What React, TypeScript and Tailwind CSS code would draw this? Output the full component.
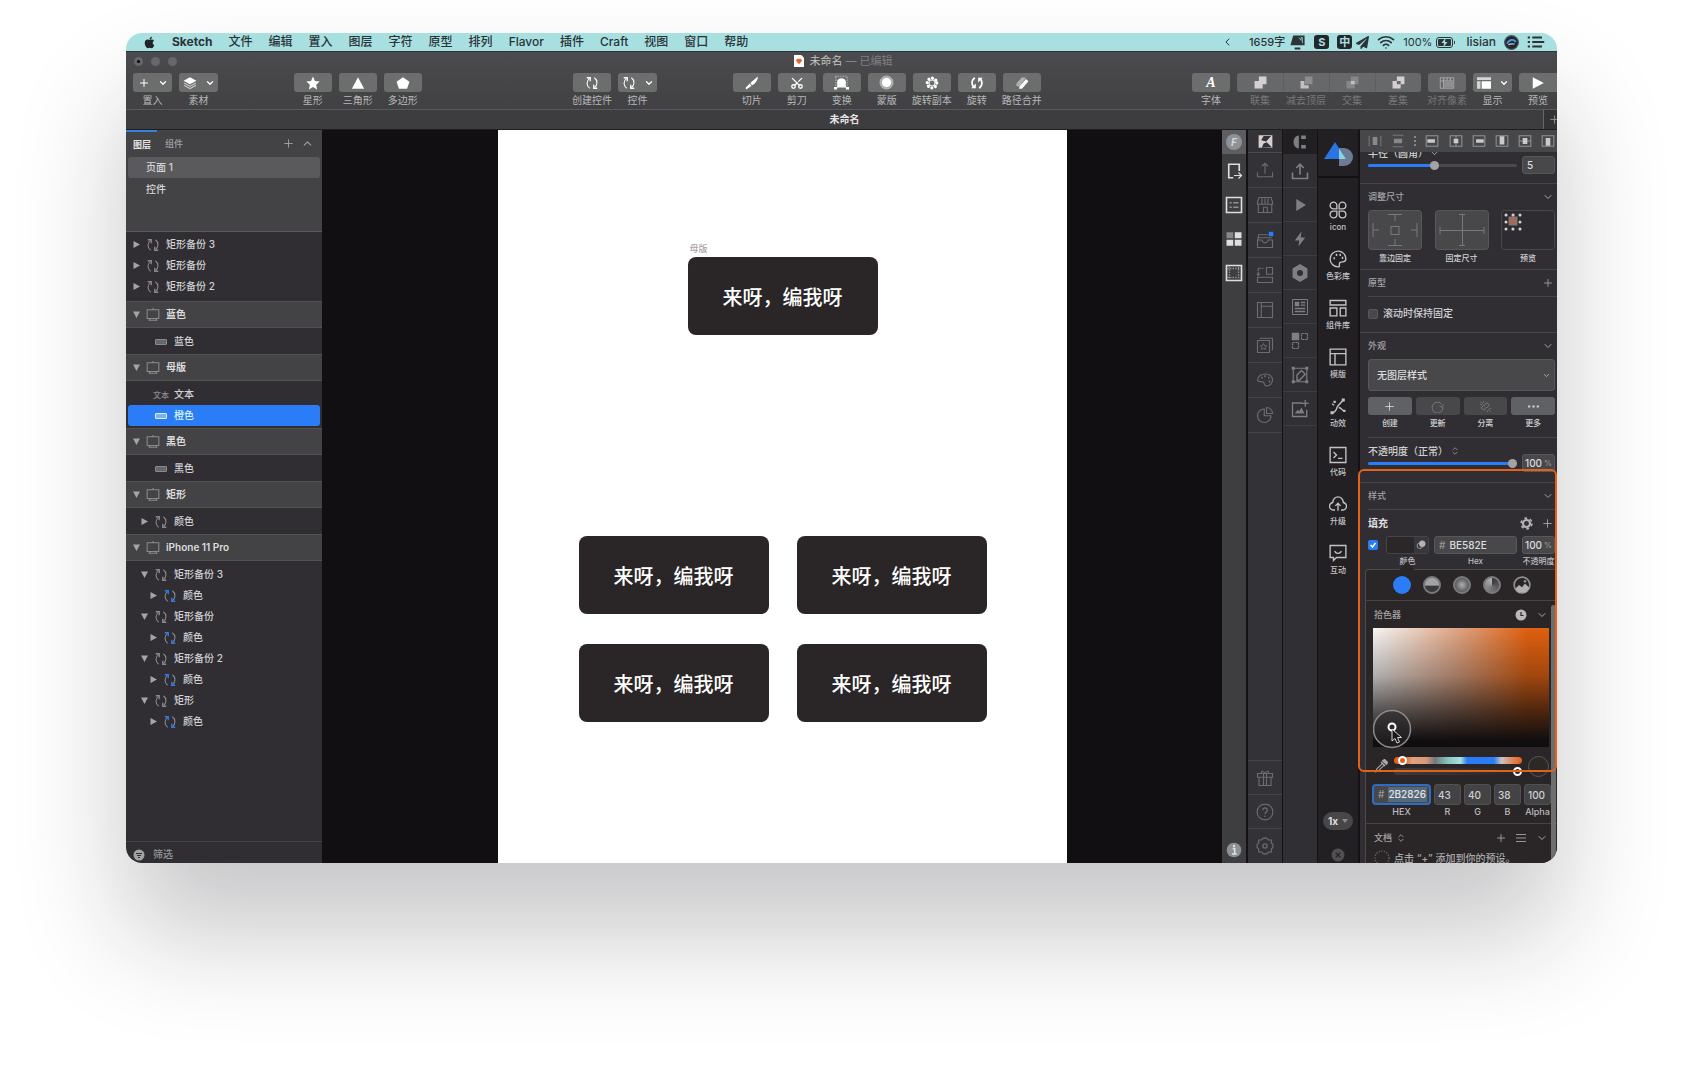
import { ReactNode } from 'react';
import { ChevronDown, ChevronUp, ChevronsUpDown, Plus, Scissors, Wifi } from 'lucide-react';
import { FaApple, FaPaperPlane } from 'react-icons/fa';

type SvgProps = { size?: number; className?: string; children?: ReactNode };

function Svg({ size = 18, className = '', children }: SvgProps) {
  return (
    <svg
      width={size}
      height={size}
      viewBox="0 0 24 24"
      fill="none"
      stroke="currentColor"
      strokeWidth="1.8"
      className={`shrink-0 ${className}`}
      aria-hidden="true"
    >
      {children}
    </svg>
  );
}

function SymbolIcon({ size = 14, accent = 'currentColor' }: { size?: number; accent?: string }) {
  return (
    <Svg size={size}>
      <path d="M8 21 C2 17 2 8 8 4" />
      <path d="M16 3 C22 7 22 16 16 20" />
      <path d="M3 3h6v6" stroke={accent} strokeWidth="2.2" />
      <path d="M21 21h-6v-6" stroke={accent} strokeWidth="2.2" />
    </Svg>
  );
}

/* ---------- menu bar ---------- */

const menus = ['文件', '编辑', '置入', '图层', '字符', '原型', '排列', 'Flavor', '插件', 'Craft', '视图', '窗口', '帮助'];

function MenuBar() {
  return (
    <nav className="flex h-[18px] shrink-0 items-center justify-between bg-[#a8dfe1] pl-[17px] pr-3 text-xs font-medium leading-[18px] text-[#2b3437]">
      <div className="flex items-center gap-4">
        <FaApple size={13} className="text-[#1f2426]" />
        <a href="#sketch" className="font-bold">Sketch</a>
        {menus.map((menu) => (
          <a key={menu} href={`#${menu}`}>{menu}</a>
        ))}
      </div>
      <div className="flex items-center text-[11px]">
        <Svg size={10}><path d="M15 4 7 12l8 8" strokeWidth="2.4" /></Svg>
        <span className="ml-4">1659字</span>
        <Svg size={17} className="ml-1">
          <path d="M6 2h16v14H2z M8 19h8v3H8z" fill="currentColor" stroke="none" />
          <path d="m14 5 3 4v-4h2v8" stroke="#a8dfe1" strokeWidth="1" />
        </Svg>
        <span className="ml-2 flex h-[14px] w-[15px] items-center justify-center rounded-[3px] bg-[#20282a] text-[11px] font-bold leading-none text-[#a8dfe1]">S</span>
        <span className="ml-2 flex h-[14px] w-[15px] items-center justify-center rounded-[3px] bg-[#20282a] text-[11px] font-bold leading-none text-[#a8dfe1]">中</span>
        <FaPaperPlane size={13} className="ml-1" />
        <Wifi size={18} strokeWidth={2.2} className="ml-2" />
        <span className="ml-2 font-normal">100%</span>
        <svg width="20" height="11" viewBox="0 0 20 11" className="ml-1" aria-hidden="true">
          <rect x=".5" y=".5" width="16" height="10" rx="2.5" fill="none" stroke="currentColor" />
          <rect x="2" y="2" width="13" height="7" rx="1" fill="currentColor" />
          <path d="M18 3.500c1.400.6 1.400 3.400 0 4z" fill="currentColor" />
          <path d="M9.500 1 5.500 6H8l-.5 4 4-5H9z" fill="#a8dfe1" />
        </svg>
        <span className="ml-[10px] text-xs">lisian</span>
        <Svg size={15} className="ml-2">
          <circle cx="12" cy="12" r="11" fill="#23262c" stroke="#4a5560" />
          <path d="M5 14c3-7 10-8 14-3" stroke="#4b95ea" strokeWidth="3" />
          <path d="M7 16c4-3 7-1 10-2" stroke="#c9d4de" />
        </Svg>
        <Svg size={18} className="ml-2">
          <path d="M7 6h13M7 12h16M7 18h13" strokeWidth="2.600" />
          <path d="M1 6h3M1 12h3M1 18h3" strokeWidth="2.600" />
        </Svg>
      </div>
    </nav>
  );
}

/* ---------- toolbar ---------- */

type ToolProps = {
  label: string;
  icon: ReactNode;
  menu?: boolean;
  disabled?: boolean;
  width?: string;
  shape?: string;
};

function Tool({ label, icon, menu, disabled, width, shape = 'rounded-[3px]' }: ToolProps) {
  return (
    <button
      type="button"
      disabled={disabled}
      className={`group flex shrink-0 flex-col items-center ${width ?? (menu ? 'w-[39px]' : 'w-[38px]')}`}
    >
      <span
        className={`flex h-[19px] w-full items-center justify-center gap-2 bg-[#6c6e6e] text-white group-disabled:bg-[#666869] group-disabled:text-[#a9a7a9] ${shape}`}
      >
        {icon}
        {menu && <ChevronDown size={10} strokeWidth={3} />}
      </span>
      <span className="h-[15px] whitespace-nowrap text-[10px] leading-4 text-[#b8b8ba] group-disabled:text-[#77777b]">
        {label}
      </span>
    </button>
  );
}

const solid = { fill: 'currentColor', stroke: 'none' };

function ToolBar() {
  return (
    <header className="shrink-0 border-t border-[#2c3438] bg-linear-to-b from-[#4b4b4d] to-[#414143] pb-[2px]">
      <div className="grid h-[21px] grid-cols-[1fr_auto_1fr] items-start">
        <div className="flex gap-2 pl-2 pt-[5px]">
          <span className="flex size-[9px] items-center justify-center rounded-full bg-[#66666d]">
            <i className="size-[3px] rounded-full bg-black" />
          </span>
          <span className="size-[9px] rounded-full bg-[#66666d]" />
          <span className="size-[9px] rounded-full bg-[#66666d]" />
        </div>
        <h1 className="flex items-center gap-[5px] pl-1 text-[11px] leading-[18px] text-[#c4c4c6]">
          <svg width="10" height="12" viewBox="0 0 11 13" aria-hidden="true">
            <path d="M0 0h8l3 3v10H0z" fill="#fff" />
            <path d="M3.500 4h4l1.500 2-3.500 4L2 6z" fill="#e4672b" />
          </svg>
          <span>未命名 <span className="text-[#7f7f83]">— 已编辑</span></span>
        </h1>
      </div>
      <div className="flex pl-[7px]">
        <div className="flex gap-[7px]">
          <Tool label="置入" menu icon={<Plus size={12} strokeWidth={2} />} />
          <Tool
            label="素材"
            menu
            icon={
              <Svg size={14}>
                <path d="m12 2 11 6-11 6L1 8z" {...solid} />
                <path d="m2 12 10 5.500L22 12M2 16l10 5.500L22 16" stroke="#c9c9c9" />
              </Svg>
            }
          />
        </div>
        <div className="flex-1" />
        <div className="flex gap-[7px]">
          <Tool
            label="星形"
            icon={<Svg size={14}><path d="m12 1 3.400 7.400 8 1-6 5.600 1.600 8L12 19l-7 4 1.600-8-6-5.600 8-1z" {...solid} /></Svg>}
          />
          <Tool label="三角形" icon={<Svg size={14}><path d="M12 2 22.500 22h-21z" {...solid} /></Svg>} />
          <Tool label="多边形" icon={<Svg size={14}><path d="m12 2 11 8-4 12H5L1 10z" {...solid} /></Svg>} />
        </div>
        <div className="flex-2" />
        <div className="flex gap-[7px]">
          <Tool label="创建控件" icon={<SymbolIcon />} />
          <Tool label="控件" menu icon={<SymbolIcon />} />
        </div>
        <div className="flex-1" />
        <div className="flex gap-[7px]">
          <Tool
            label="切片"
            icon={<Svg size={14}><path d="M22 1 9 12l3 4c5-2 10-8 10-15zM8 13l3 4-9 6-1-3z" {...solid} /></Svg>}
          />
          <Tool label="剪刀" icon={<Scissors size={14} strokeWidth={2.200} className="-rotate-90" />} />
          <Tool
            label="变换"
            icon={
              <Svg size={15}>
                <path d="M2 2h20M3 3v17M21 3v17" stroke="#bdbdbd" strokeDasharray="2 2" />
                <path d="M4 20c2-3 1-5 1-9 0-8 14-8 14 0 0 4-1 6 1 9z" {...solid} />
                <path d="M0 19h5v4H0zM19 19h5v4h-5z" {...solid} />
              </Svg>
            }
          />
          <Tool
            label="蒙版"
            icon={
              <Svg size={15}>
                <circle cx="12" cy="12" r="10.500" fill="#a9abab" stroke="#c9c9c9" strokeWidth="1" />
                <circle cx="12" cy="12" r="7.500" {...solid} />
              </Svg>
            }
          />
          <Tool
            label="旋转副本"
            icon={
              <Svg size={14}>
                <circle cx="12" cy="12" r="8.200" strokeWidth="5.600" strokeDasharray="0.010 6.430" strokeLinecap="round" />
                <circle cx="12" cy="12" r="5" strokeWidth="1.500" />
              </Svg>
            }
          />
          <Tool
            label="旋转"
            icon={
              <Svg size={14}>
                <path d="M8 20C2 16 2 8 8 3" strokeWidth="3" />
                <path d="M16 4c6 4 6 12 0 17" strokeWidth="3" />
                <path d="M2 21h8v-8zM22 3h-8v8z" {...solid} />
              </Svg>
            }
          />
          <Tool
            label="路径合并"
            icon={
              <Svg size={14}>
                <path d="M3 12 12 2l7 1L7 18l-5-1z" fill="#b0b0b0" stroke="none" />
                <path d="M8 17 19 5l4 4-11 13H7z" {...solid} />
              </Svg>
            }
          />
        </div>
        <div className="flex-2" />
        <div className="flex gap-[7px]">
          <Tool label="字体" icon={<span className="font-[Liberation_Serif] text-sm font-bold italic leading-none">A</span>} />
          <div className="flex">
            <Tool
              label="联集"
              disabled
              width="w-[46px]"
              shape="rounded-l-[3px]"
              icon={<Svg size={13}><path d="M9 1h14v14h-7v8H1V9h8z" fill="#d5cfd1" stroke="none" /></Svg>}
            />
            <Tool
              label="减去顶层"
              disabled
              width="w-[46px]"
              shape="border-l border-[#5c5e61]"
              icon={
                <Svg size={13}>
                  <path d="M9 1h14v14H9z" fill="#8c8e8e" stroke="none" />
                  <path d="M1 9h7v8h8v6H1z" fill="#c5bfc1" stroke="none" />
                </Svg>
              }
            />
            <Tool
              label="交集"
              disabled
              width="w-[46px]"
              shape="border-l border-[#5c5e61]"
              icon={
                <Svg size={13}>
                  <path d="M9 1h14v14H9zM1 9h15v14H1z" fill="#858787" stroke="none" />
                  <path d="M9 9h7v6H9z" fill="#c5bfc1" stroke="none" />
                </Svg>
              }
            />
            <Tool
              label="差集"
              disabled
              width="w-[46px]"
              shape="rounded-r-[3px] border-l border-[#5c5e61]"
              icon={
                <Svg size={13}>
                  <path d="M9 1h14v14h-7v8H1V9h8z" fill="#d5cfd1" stroke="none" />
                  <path d="M9 9h7v6H9z" fill="#66686a" stroke="none" />
                </Svg>
              }
            />
          </div>
          <Tool
            label="对齐像素"
            disabled
            icon={
              <Svg size={16}>
                <path d="M2 4h20v16H2z" strokeDasharray="2 1" />
                <path d="M2 9h20M7 4v16M12 4v5M17 4v5" />
                <path d="M8 10h13v9H8z" fill="#8f8f91" stroke="none" />
              </Svg>
            }
          />
          <Tool
            label="显示"
            menu
            icon={
              <Svg size={14}>
                <path d="M0 2h24v5H0zM0 9h6v13H0z" {...solid} fill="#d5d5d5" />
                <path d="M8 9h16v13H8z" {...solid} />
              </Svg>
            }
          />
          <Tool
            label="预览"
            shape="rounded-l-[3px]"
            icon={<Svg size={14}><path d="M3 2v20l19-10z" {...solid} /></Svg>}
          />
        </div>
      </div>
    </header>
  );
}

/* ---------- layer list ---------- */

type Layer = {
  name: string;
  kind: 'symbol' | 'override' | 'rect' | 'text';
  level: number;
  open?: boolean;
  selected?: boolean;
};

const layerGroups: { artboard?: string; layers: Layer[] }[] = [
  {
    layers: [
      { name: '矩形备份 3', kind: 'symbol', level: 0 },
      { name: '矩形备份', kind: 'symbol', level: 0 },
      { name: '矩形备份 2', kind: 'symbol', level: 0 },
    ],
  },
  { artboard: '蓝色', layers: [{ name: '蓝色', kind: 'rect', level: 1 }] },
  {
    artboard: '母版',
    layers: [
      { name: '文本', kind: 'text', level: 1 },
      { name: '橙色', kind: 'rect', level: 1, selected: true },
    ],
  },
  { artboard: '黑色', layers: [{ name: '黑色', kind: 'rect', level: 1 }] },
  { artboard: '矩形', layers: [{ name: '颜色', kind: 'symbol', level: 1 }] },
  {
    artboard: 'iPhone 11 Pro',
    layers: [
      { name: '矩形备份 3', kind: 'symbol', level: 1, open: true },
      { name: '颜色', kind: 'override', level: 2 },
      { name: '矩形备份', kind: 'symbol', level: 1, open: true },
      { name: '颜色', kind: 'override', level: 2 },
      { name: '矩形备份 2', kind: 'symbol', level: 1, open: true },
      { name: '颜色', kind: 'override', level: 2 },
      { name: '矩形', kind: 'symbol', level: 1, open: true },
      { name: '颜色', kind: 'override', level: 2 },
    ],
  },
];

const indents = ['pl-[5px]', 'pl-[13px]', 'pl-[22px]'];

function Arrow({ open }: { open?: boolean }) {
  return (
    <svg width="7" height="7" viewBox="0 0 7 7" fill="#a5a5a7" aria-hidden="true">
      <path d={open ? 'M0 .5h7L3.500 7z' : 'M.5 0v7L7 3.500z'} />
    </svg>
  );
}

function LayerRow({ layer }: { layer: Layer }) {
  const hasArrow = layer.kind === 'symbol' || layer.kind === 'override';
  return (
    <button
      type="button"
      className={`mx-[2px] flex h-[21px] items-center gap-[6px] rounded-[3px] text-[10px] font-medium ${indents[layer.level]} ${
        layer.selected ? 'bg-[#2a7df6] text-[#d5f2ea]' : 'text-[#d2d2d4]'
      }`}
    >
      <span className="w-[7px]">{hasArrow && <Arrow open={layer.open} />}</span>
      <span className={`flex w-[14px] justify-center ${layer.selected ? 'text-[#d5f2ea]' : 'text-[#8a8b90]'}`}>
        {layer.kind === 'symbol' && <SymbolIcon />}
        {layer.kind === 'override' && <SymbolIcon accent="#2a7df6" />}
        {layer.kind === 'text' && <span className="whitespace-nowrap text-[8px]">文本</span>}
        {layer.kind === 'rect' && (
          <svg width="12" height="6" viewBox="0 0 12 6" aria-hidden="true">
            <rect x=".5" y=".5" width="11" height="5" rx=".5" fill={layer.selected ? '#7fb0e8' : '#66676b'} stroke="currentColor" />
          </svg>
        )}
      </span>
      {layer.name}
    </button>
  );
}

function Sidebar() {
  return (
    <aside className="flex w-[196px] shrink-0 flex-col bg-[#302e33]">
      <div className="border-b border-[#5a5a5c] bg-[#434345] pb-[31px]">
        <div className="flex h-[27px] items-center text-[9px] font-medium text-[#a0a0a2]">
          <button type="button" className="h-full border-t-2 border-[#3b7fdc] pl-[7px] pr-[6px] font-bold text-[#e4e4e6]">图层</button>
          <button type="button" className="ml-2 h-full">组件</button>
          <button type="button" aria-label="添加页面" className="ml-auto"><Plus size={13} strokeWidth={1.700} /></button>
          <button type="button" aria-label="收起页面" className="ml-[6px] mr-2"><ChevronUp size={13} strokeWidth={2} /></button>
        </div>
        <div className="mx-[2px] flex flex-col gap-px text-[10px] font-medium text-[#d6d6d8]">
          <button type="button" className="h-[21px] rounded-[3px] bg-[#5a5a5c] pl-[18px] text-left">页面 1</button>
          <button type="button" className="h-[21px] pl-[18px] text-left">控件</button>
        </div>
      </div>
      <div className="flex min-h-0 flex-1 flex-col overflow-hidden">
        {layerGroups.map((group, i) => (
          <section key={i} className="flex flex-col">
            {group.artboard && (
              <button
                type="button"
                className="flex h-[27px] items-center gap-[6px] border-y border-[#525254] bg-[#434345] pl-[7px] text-[10px] font-semibold text-[#dcdcde]"
              >
                <Arrow open />
                <Svg size={14} className="text-[#8a8b90]">
                  <path d="M2 3h20v15H2zM12 0v3M7 18l-2 4M17 18l2 4M5 21h14" />
                </Svg>
                {group.artboard}
              </button>
            )}
            <div className={`flex flex-col ${group.artboard ? 'pb-[2px] pt-[3px]' : 'pb-1 pt-[2px]'}`}>
              {group.layers.map((layer, j) => (
                <LayerRow key={j} layer={layer} />
              ))}
            </div>
          </section>
        ))}
      </div>
      <label className="flex h-[22px] shrink-0 items-center gap-2 border-t border-[#464448] pl-[7px] pt-1 text-[10px] font-medium text-[#98989b]">
        <Svg size={12}>
          <circle cx="12" cy="12" r="11" fill="#a3a3a5" stroke="none" />
          <path d="M6 9h12M8 13h8M10 17h4" stroke="#302e33" strokeWidth="2.200" />
        </Svg>
        <input aria-label="筛选" placeholder="筛选" className="min-w-0 flex-1 bg-transparent outline-none placeholder:text-[#98989b]" />
      </label>
    </aside>
  );
}

/* ---------- canvas ---------- */

function Card() {
  return (
    <div className="flex h-[78px] w-[190px] items-center justify-center rounded-lg bg-[#2a2628] pt-1 text-xl font-medium text-white">
      来呀，编我呀
    </div>
  );
}

function Canvas() {
  return (
    <main className="flex min-w-0 flex-1 bg-[#110f11] pl-[176px] pr-[155px]">
      <div className="flex flex-1 flex-col items-center overflow-hidden bg-white pt-28">
        <figure>
          <figcaption className="pb-px pl-[2px] text-[9px] font-medium leading-[14px] text-[#a9a3a5]">母版</figcaption>
          <Card />
        </figure>
        <div className="mt-[201px] grid grid-cols-2 gap-x-7 gap-y-[30px]">
          <Card />
          <Card />
          <Card />
          <Card />
        </div>
      </div>
    </main>
  );
}

/* ---------- plugin strips ---------- */

function Strip({ icons, cell, line }: { icons: { name: string; icon: ReactNode }[]; cell: string; line: string }) {
  return (
    <>
      {icons.map(({ name, icon }) => (
        <button key={name} type="button" aria-label={name} className={`flex shrink-0 items-center justify-center ${cell} ${line}`}>
          {icon}
        </button>
      ))}
    </>
  );
}

const flowIcons = [
  {
    name: 'export',
    icon: <Svg><path d="M11 21H5V3h14v9" strokeWidth="2.200" /><path d="M12 18h9M18 14l4 4-4 4" strokeWidth="1.600" /></Svg>,
  },
  {
    name: 'list',
    icon: <Svg><path d="M2 2h20v20H2z" strokeWidth="2.200" /><path d="M6 9h3M6 15h3M11 9h7M11 15h7" stroke="#909092" /></Svg>,
  },
  {
    name: 'tiles',
    icon: (
      <Svg>
        <path d="M2 3h9v8H2z" fill="#88888a" stroke="none" />
        <path d="M13 3h9v8h-9zM2 13h9v8H2zM13 13h9v8h-9z" {...solid} />
      </Svg>
    ),
  },
  {
    name: 'frame',
    icon: <Svg><path d="M2 2h20v20H2z" strokeWidth="2.200" /><path d="M6 3v18M18 3v18M3 6h18M3 18h18" stroke="#909092" strokeDasharray="2 1.500" /></Svg>,
  },
];

const kitchenIcons = [
  { name: 'upload', icon: <Svg><path d="M2 15v6h20v-6M12 17V3M8 7l4-4 4 4" strokeWidth="1.500" /></Svg> },
  {
    name: 'store',
    icon: (
      <Svg>
        <path d="M4 2h16l2 6v3H2V8zM3 11v11h18V11M10 22v-7h5v7M8 3v8M12 3v8M16 3v8" strokeWidth="1.500" />
      </Svg>
    ),
  },
  {
    name: 'inbox',
    icon: (
      <Svg>
        <path d="M5 5h11M3 9h18M2 12v10h20V12h-6c-1 5-7 5-8 0zM2 12l2-8" strokeWidth="1.500" />
        <path d="M17 1h6v6h-6z" fill="#2a7df6" stroke="none" />
      </Svg>
    ),
  },
  {
    name: 'components',
    icon: <Svg><path d="M14 2h8v9h-8zM2 15h20v7H2z" strokeWidth="1.500" /><path d="M3 3h7M3 3v9M1 10l2 3 2-3" strokeWidth="1.500" strokeDasharray="4 1" /></Svg>,
  },
  { name: 'layout', icon: <Svg><path d="M2 2h20v20H2zM7 2v20M7 7h15" strokeWidth="1.500" /></Svg> },
  {
    name: 'favorites',
    icon: (
      <Svg>
        <path d="M2 6h16v16H2zM5 3h17v16" strokeWidth="1.500" />
        <path d="m10 10 1.300 2.700 3 .4-2.200 2 .6 3-2.700-1.500L7.300 18l.6-3-2.200-2 3-.3z" strokeWidth="1.200" />
      </Svg>
    ),
  },
  {
    name: 'palette',
    icon: (
      <Svg>
        <path d="M2 12C3 6 8 4 13 4c6 0 9 4 9 8s-3 8-8 8c-4 0-2-4-4-5-3-2-7 1-8-3z" strokeWidth="1.500" />
        <path d="M7 9h2M11 7h2M16 9h2M17 14h2" strokeWidth="2.400" />
      </Svg>
    ),
  },
  { name: 'chart', icon: <Svg><path d="M11 4a9 9 0 1 0 9 9h-9zM14 2c4 0 8 3 8 8h-8z" strokeWidth="1.500" /></Svg> },
];

const kitchenFooter = [
  {
    name: 'gift',
    icon: <Svg><path d="M2 6h20v5H2zM4 11v11h16V11M10 6v16M14 6v16M12 6C9 1 6 3 8 6M12 6c3-5 6-3 4 0" strokeWidth="1.500" /></Svg>,
  },
  {
    name: 'help',
    icon: <Svg><circle cx="12" cy="12" r="10.500" strokeWidth="1.500" /><path d="M9 9.500c0-4 6-4 6 0 0 2.500-3 2.500-3 5M12 16.500v2" strokeWidth="1.700" /></Svg>,
  },
  {
    name: 'settings',
    icon: (
      <Svg>
        <path d="M9.500 1.500h5l2 2.500h4v4l2 2v4l-2 2v4h-4l-2 2.500h-5l-2-2.500h-4v-4l-2-2v-4l2-2V4h4z" strokeWidth="1.500" />
        <circle cx="12" cy="12" r="2.800" />
      </Svg>
    ),
  },
];

const craftIcons = [
  { name: 'sync', icon: <Svg><path d="M2 14v8h20v-8M12 17V3M7 8l5-5 5 5" strokeWidth="2.200" /></Svg> },
  { name: 'play', icon: <Svg><path d="M7 4v16l13-8z" {...solid} /></Svg> },
  { name: 'bolt', icon: <Svg><path d="M14 2 5 14h6l-1 8 9-12h-6z" {...solid} /></Svg> },
  {
    name: 'plugin',
    icon: <Svg><path d="m12 0 10 6v12l-10 6-10-6V6zm0 8a4 4 0 1 0 0 8 4 4 0 0 0 0-8z" fillRule="evenodd" {...solid} /></Svg>,
  },
  {
    name: 'data',
    icon: <Svg><path d="M2 2h20v20H2z" strokeWidth="1.300" /><path d="M5 5h6v6H5z" {...solid} /><path d="M13 6h6M13 9.500h6M5 14h14M5 18h14" /></Svg>,
  },
  {
    name: 'duplicate',
    icon: <Svg><path d="M1 1h10v10H1z" {...solid} /><path d="M14 2h8v8h-8zM2 14h8v8H2z" strokeWidth="1.500" strokeDasharray="3 1" /></Svg>,
  },
  {
    name: 'edit',
    icon: <Svg><path d="M3 3h18v18H3z" strokeWidth="1.500" /><path d="M1 1h4v4H1zM19 1h4v4h-4zM1 19h4v4H1zM19 19h4v4h-4z" {...solid} /><path d="m8 12 6-6 5 5-8 8H8z" /></Svg>,
  },
  {
    name: 'image',
    icon: <Svg><path d="M15 4H2v18h19v-9M19 0v9M14.500 4.500h9" /><path d="m5 18 4-5 2 2 3-5 4 8z" {...solid} /></Svg>,
  },
];

const panelItems = [
  {
    label: 'icon',
    icon: (
      <Svg>
        <path d="M10.500 10.500H6A4.500 4.500 0 1 1 10.500 6zM13.500 10.500V6a4.500 4.500 0 1 1 4.500 4.500zM10.500 13.500V18A4.500 4.500 0 1 1 6 13.500zM13.500 13.500H18a4.500 4.500 0 1 1-4.500 4.500z" />
      </Svg>
    ),
  },
  {
    label: '色彩库',
    icon: (
      <Svg>
        <path d="M12 1.500a10.500 10.500 0 1 0 0 21c4 0 0-4 3-6 3-1.500 7.500 1 7.500-4.500C22.500 6 18 1.500 12 1.500z" />
        <path d="M6 11h2M9 6.500h2M14 6.500h2M17 10.500h2" strokeWidth="2.800" />
      </Svg>
    ),
  },
  { label: '组件库', icon: <Svg><path d="M1.500 2h21v6h-21zM1.500 12h9v10.500h-9zM15 12h7.500v10.500H15z" /></Svg> },
  { label: '模版', icon: <Svg><path d="M1.500 1.500h21v21h-21zM1.500 7.500h21M8 7.500v15" /></Svg> },
  {
    label: '动效',
    icon: (
      <Svg>
        <path d="M5 21c3-1 5-4 6-8M11 13l7-8M13 14c3 0 4 3 7 5M4 9l3 2" />
        <path d="M17 2h4v4h-4zM2 19h4v4H2zM19 17h3v3h-3zM6 5h3v3H6z" {...solid} />
      </Svg>
    ),
  },
  { label: '代码', icon: <Svg><path d="M1.500 2h21v20h-21zM6 8l4 4-4 4M12 16.500h6" /></Svg> },
  {
    label: '升级',
    icon: <Svg><path d="M8 20H6.500A5 5 0 0 1 5 10c0-5 4-7.500 7-7.500s7 2.500 7 7.500a5 5 0 0 1-1.500 10H16M12 21V11M8.500 14.500 12 11l3.500 3.500" /></Svg>,
  },
  { label: '互动', icon: <Svg><path d="M1.500 2h21v16H10l-4 4v-4H1.500zM7.500 9.500c2 4 7 4 9 0" /></Svg> },
];

function PluginStrips() {
  return (
    <div className="flex shrink-0 bg-[#141214] pr-[2px] text-[#dededf]">
      <div className="flex w-6 flex-col bg-[#3e3e40]">
        <div className="flex h-6 items-center justify-center bg-[#5e5e60]">
          <span className="flex size-4 items-center justify-center rounded-full bg-[#8d9298] text-[10px] font-bold italic leading-none text-[#d5d7da]">F</span>
        </div>
        <Strip icons={flowIcons} cell="h-[34px]" line="" />
        <button type="button" aria-label="info" className="mb-[5px] mt-auto flex justify-center">
          <Svg size={16}>
            <circle cx="12" cy="12" r="11" fill="#8b9196" stroke="none" />
            <path d="M10 10h3v8M9 18h7" stroke="#e2e2e2" strokeWidth="2.400" />
            <path d="M10.500 6h3" stroke="#e2e2e2" strokeWidth="3" />
          </Svg>
        </button>
      </div>
      <div className="ml-[2px] flex w-[34px] flex-col bg-[#333236] text-[#6b6e6f]">
        <div className="flex h-[23px] items-center justify-center border-b border-[#4a494c]">
          <Svg size={15}>
            <path d="M1 2h22v20H1z" fill="#d8cfd0" stroke="none" />
            <path d="M9 3 5 10l8 2 8-9M6 22l3-7 5-2 8 8" fill="#333236" stroke="none" />
          </Svg>
        </div>
        <Strip icons={kitchenIcons} cell="h-[35px]" line="border-b border-[#454548]" />
        <div className="mt-auto flex flex-col pb-px">
          <Strip icons={kitchenFooter} cell="h-[34px]" line="border-t border-[#454548]" />
        </div>
      </div>
      <div className="ml-px flex w-[34px] flex-col bg-[#302f34] text-[#7d7f80]">
        <div className="flex h-6 items-center justify-center bg-[#211f21]">
          <Svg size={14}>
            <path d="M10 1v22C-2 22-2 2 10 1zM14 1h8v6h-8zM14 17h8v6h-8z" fill="#7c8084" stroke="none" />
          </Svg>
        </div>
        <Strip icons={craftIcons} cell="h-[34px]" line="border-b border-[#3e3d42]" />
      </div>
      <div className="ml-px flex w-10 flex-col items-center bg-[#232023]">
        <div className="flex h-[48px] w-full items-center justify-center border-b-2 border-[#111012]">
          <svg width="31" height="25" viewBox="0 0 31 25" aria-hidden="true">
            <path d="M16 7h5a9 9 0 0 1 0 18h-5z" fill="#6c7a92" />
            <path d="M12 1 23 18H1z" fill="#2b74e4" />
            <path d="M16 7.500 23 18h-7z" fill="#8fd0e0" />
          </svg>
        </div>
        <nav className="flex flex-col pt-[23px]">
          {panelItems.map(({ label, icon }) => (
            <a key={label} href={`#${label}`} className="flex h-[49px] flex-col items-center text-[#c3c3c5]">
              {icon}
              <span className="text-[8px] font-medium leading-4">{label}</span>
            </a>
          ))}
        </nav>
        <button type="button" className="mt-auto flex h-[18px] w-[30px] items-center justify-center gap-1 rounded-full bg-[#47464a] text-[10px] font-bold text-[#dededf]">
          1x
          <svg width="6" height="4" viewBox="0 0 6 4" fill="#8a8a8c" aria-hidden="true"><path d="M0 0h6L3 4z" /></svg>
        </button>
        <button type="button" aria-label="close" className="mb-[1px] mt-[18px]">
          <Svg size={14}>
            <circle cx="12" cy="12" r="11" fill="#525054" stroke="none" />
            <path d="m8 8 8 8M16 8l-8 8" stroke="#232023" strokeWidth="2.200" />
          </Svg>
        </button>
      </div>
    </div>
  );
}

/* ---------- inspector ---------- */

const alignPaths = [
  { name: '水平分布', d: 'M2 3v18M22 3v18', bar: 'M8 5h8v14H8z', dim: true },
  { name: '垂直分布', d: 'M3 2h18M3 22h18', bar: 'M5 8h14v8H5z', dim: true },
  { name: '左对齐', d: 'M2 3h20v18H2z', bar: 'M4 9h13v6H4z' },
  { name: '水平居中', d: 'M2 3h20v18H2zM12 3v18', bar: 'M8 8h8v8H8z' },
  { name: '右对齐', d: 'M2 3h20v18H2z', bar: 'M7 9h13v6H7z' },
  { name: '顶部对齐', d: 'M2 3h20v18H2z', bar: 'M8 4h8v14H8z' },
  { name: '垂直居中', d: 'M2 3h20v18H2zM2 12h20', bar: 'M8 7h8v10H8z' },
  { name: '底部对齐', d: 'M2 3h20v18H2z', bar: 'M8 7h8v13H8z' },
];

const field = 'flex items-center rounded-[3px] border border-[#58585a] bg-[#48484a] text-[10px] font-medium text-[#dcdcde]';

function NumberField({ label, value, unit }: { label: string; value: string; unit?: string }) {
  return (
    <label className={`${field} h-[18px] w-[33px] ${unit ? 'px-[2px]' : 'px-1'}`}>
      <input aria-label={label} defaultValue={value} className="w-full min-w-0 bg-transparent outline-none" />
      {unit && <span className="text-[8px] text-[#98989b]">{unit}</span>}
    </label>
  );
}

const thumb =
  '[&::-webkit-slider-thumb]:size-[9px] [&::-webkit-slider-thumb]:appearance-none [&::-webkit-slider-thumb]:rounded-full [&::-webkit-slider-thumb]:bg-[#a3a3a5]';
const ringThumb =
  '[&::-webkit-slider-thumb]:size-[9px] [&::-webkit-slider-thumb]:appearance-none [&::-webkit-slider-thumb]:rounded-full [&::-webkit-slider-thumb]:border-2 [&::-webkit-slider-thumb]:border-white';

type SliderProps = { label: string; id: string; value: number; track: string; text: string; unit?: string; sort?: ReactNode };

function SliderRow({ label, id, value, track, text, unit, sort }: SliderProps) {
  return (
    <div className="flex items-end gap-[5px] pl-2 pr-[2px]">
      <div className="min-w-0 flex-1 pb-[3px]">
        <label htmlFor={id} className="flex h-3 items-center gap-[2px] text-[10px] font-medium leading-3 text-[#cfcfd1]">
          {label}
          {sort}
        </label>
        <div className="flex h-3 items-center">
          <input id={id} type="range" defaultValue={value} className={`h-[3px] w-full appearance-none rounded-full ${track} ${thumb}`} />
        </div>
      </div>
      <NumberField label={`${label}数值`} value={text} unit={unit} />
    </div>
  );
}

function SectionHeader({ title, children }: { title: string; children: ReactNode }) {
  return (
    <div className="flex h-[27px] items-center justify-between border-t border-[#454448] pl-2 pr-[3px] text-[9px] font-medium text-[#a3a3a6]">
      <h2>{title}</h2>
      {children}
    </div>
  );
}

const down = <ChevronDown size={12} strokeWidth={2} />;

const styleActions = [
  { label: '创建', on: true, icon: <Plus size={13} strokeWidth={1.700} /> },
  { label: '更新', on: false, icon: <Svg size={13}><path d="M20 8a10 10 0 1 0 2 6M23 8l-2 6-5-3" /></Svg> },
  { label: '分离', on: false, icon: <Svg size={13}><path d="m9 11 5-6 5 4-5 6M14 13l-5 6-5-4 5-6M3 3l4 4M17 17l4 4M2 8l3 1M8 2l1 3M22 16l-3-1M16 22l-1-3" /></Svg> },
  { label: '更多', on: true, icon: <Svg size={13}><path d="M2 12h4M10 12h4M18 12h4" strokeWidth="4" /></Svg> },
];

function ColorPopover() {
  return (
    <div className="relative ml-[5px] rounded-tl border-l border-t border-[#4d4a4c] bg-[#2a2627]">
      <svg width="18" height="8" viewBox="0 0 18 8" className="absolute -top-2 left-8" aria-hidden="true">
        <path d="M0 8c5 0 6-8 9-8s4 8 9 8z" fill="#2a2627" />
      </svg>
      <div className="flex h-[30px] items-center gap-3 pl-[27px] text-[#8f8f91]">
        <button type="button" aria-label="纯色" className="size-[18px] rounded-full bg-[#2a7df6]" />
        <button type="button" aria-label="线性渐变" className="size-[18px] rounded-full border-2 border-[#7a7a7c] bg-linear-to-b from-[#a3a3a5] from-50% to-[#3a383a] to-60%" />
        <button type="button" aria-label="径向渐变" className="size-[18px] rounded-full border-2 border-[#7a7a7c] bg-radial from-[#b0b0b2] to-[#3a383a]" />
        <button type="button" aria-label="角度渐变" className="size-[18px] rounded-full border-2 border-[#7a7a7c] bg-conic from-[#3a383a] to-[#b0b0b2]" />
        <button type="button" aria-label="图案填充">
          <Svg size={18}>
            <circle cx="12" cy="12" r="10.500" strokeWidth="2.200" />
            <path d="m3 17 5-5 4 3 4-5 6 6-5 6H7z" {...solid} fill="#b0b0b2" />
            <circle cx="16" cy="7" r="1.800" {...solid} />
          </Svg>
        </button>
      </div>
      <div className="flex h-7 items-center border-t border-[#474446] pl-2 text-[9px] font-medium text-[#a3a3a6]">
        <h3>拾色器</h3>
        <Svg size={12} className="ml-auto">
          <circle cx="12" cy="12" r="11" fill="#b9b9bb" stroke="none" />
          <path d="M12 6v7h5" stroke="#2a2627" strokeWidth="2.400" />
        </Svg>
        <ChevronDown size={12} strokeWidth={2} className="ml-[9px] mr-[9px]" />
      </div>
      <div className="ml-[7px] mr-2 h-[119px] bg-[linear-gradient(to_top,rgb(15_13_14)_5%,rgb(15_13_14/0.7)_30%,rgb(15_13_14/0.3)_60%,transparent),linear-gradient(to_right,#f6f6f6,#dfa17e_50%,#e0600f_88%)]">
        <svg width="40" height="40" viewBox="0 0 40 40" className="relative top-[81px]" aria-label="取色点">
          <circle cx="19" cy="20" r="18.500" fill="#2b2829" fillOpacity=".6" stroke="#8c8c8e" strokeWidth="1.500" />
          <circle cx="19" cy="18" r="3.500" fill="none" stroke="#fff" strokeWidth="2" />
          <path d="M19 20v12l3-2.500 2 4.500 2.500-1-2-4.500h4z" fill="#1a1819" stroke="#d5d5d5" />
        </svg>
      </div>
      <div className="flex h-[37px] items-center gap-[6px] pl-2 pr-2 pt-px">
        <Svg size={14} className="text-[#a9a9ab]">
          <path d="m15 3 3-2 5 5-2 3zM12 5l7 7" strokeWidth="2.400" fill="currentColor" />
          <path d="m14 8-9 9-2 5 5-2 9-9" />
        </Svg>
        <div className="flex flex-1 flex-col gap-1">
          <input
            type="range"
            aria-label="色相"
            defaultValue={3}
            className={`h-[7px] w-full appearance-none rounded-full bg-[linear-gradient(to_right,#e0611a_8%,#dfa17e_14%,#d99a78_25%,#727878_32%,#86c4c0_42%,#a8e0e0_52%,#2a7df6_57%,#2a7df6_78%,#c9c2c4_84%,#df8a60_92%,#e0611a)] ${ringThumb}`}
          />
          <input
            type="range"
            aria-label="透明度"
            defaultValue={100}
            className={`h-[7px] w-full appearance-none rounded-full bg-[linear-gradient(to_right,#3c3a3c,#2a2628)] ${ringThumb}`}
          />
        </div>
        <span className="size-[21px] rounded-full border border-[#5a585a] bg-[#2b2826]" />
      </div>
      <div className="flex gap-[3px] overflow-hidden pl-[6px] pr-2 text-[9px] font-medium text-[#bdbdbf]">
        <label className="flex shrink-0 flex-col items-center">
          <span className="flex h-[21px] w-[59px] items-center gap-1 rounded border-2 border-[#2f6cc4] bg-[#48484a] px-1 text-[10px]">
            <span className="text-[#98989b]">#</span>
            <input defaultValue="2B2826" className="w-[39px] bg-[#56697a] text-[#e4e4e6] outline-none" />
          </span>
          <span className="leading-[14px]">HEX</span>
        </label>
        {[['R', '43'], ['G', '40'], ['B', '38'], ['Alpha', '100']].map(([name, value]) => (
          <label key={name} className="flex w-[27px] shrink-0 flex-col items-center">
            <input defaultValue={value} className="h-[21px] w-full rounded-[3px] border border-[#505052] bg-[#434345] px-[3px] text-[10px] text-[#cfcfd1] outline-none" />
            <span className="leading-[14px]">{name}</span>
          </label>
        ))}
      </div>
      <div className="mt-1 flex h-7 items-center border-t border-[#474446] pl-2 text-[9px] font-medium text-[#a3a3a6]">
        文档
        <ChevronsUpDown size={10} className="ml-1" />
        <Plus size={12} strokeWidth={1.800} className="ml-auto" />
        <Svg size={12} className="ml-2"><path d="M2 5h20M2 12h20M2 19h20" /></Svg>
        <ChevronDown size={12} strokeWidth={2} className="ml-[9px] mr-[9px]" />
      </div>
      <p className="flex h-[14px] items-center gap-1 whitespace-nowrap pl-2 text-[10px] font-medium leading-[14px] text-[#a9a9ab]">
        <Svg size={16}><circle cx="12" cy="12" r="10.500" strokeDasharray="2 2" stroke="#6a686a" /></Svg>
        点击 “+” 添加到你的预设。
      </p>
      <span className="absolute bottom-0 right-px top-[35px] w-[5px] rounded-full bg-[#6e6e70]" />
    </div>
  );
}

function Inspector() {
  return (
    <aside className="relative flex w-[197px] shrink-0 flex-col bg-[#302e33]">
      <div className="z-10 flex h-[22px] shrink-0 items-center justify-between bg-[#47474a] pl-2 pr-[2px]">
        {alignPaths.map(({ name, d, bar, dim }, i) => (
          <div key={name} className="contents">
            {i === 2 && (
              <svg width="2" height="12" viewBox="0 0 2 12" fill="#88888b" aria-hidden="true">
                <path d="M0 1h2v2H0zM0 5h2v2H0zM0 9h2v2H0z" />
              </svg>
            )}
            <button type="button" aria-label={name}>
              <Svg size={14} className={dim ? 'text-[#77787b]' : 'text-[#8f9399]'}>
                <path d={d} />
                <path d={bar} {...solid} fill={dim ? '#88888b' : '#cdc9cb'} />
              </Svg>
            </button>
          </div>
        ))}
      </div>
      <div className="min-h-0 flex-1 overflow-hidden">
        <div className="-mt-[5px] pb-[9px]">
          <SliderRow
            label="半径（圆角）"
            id="radius"
            value={44}
            text="5"
            track="bg-[linear-gradient(to_right,#2a7df6_44%,#4a494d_44%)]"
            sort={<ChevronDown size={9} />}
          />
        </div>
        <SectionHeader title="调整尺寸">{down}</SectionHeader>
        <div className="flex justify-between pb-[2px] pl-2 pr-[2px] text-[8px] font-medium leading-[17px] text-[#d2d2d4]">
          <button type="button" className="flex flex-col items-center">
            <svg width="54" height="40" viewBox="0 0 54 40" fill="none" stroke="#78797d" aria-hidden="true">
              <rect x=".5" y=".5" width="53" height="39" rx="3" fill="#48484a" stroke="#58585a" />
              <rect x="23" y="16.500" width="8" height="8" />
              <path d="M20 4.500h14M27 5v6M20 35.500h14M27 35v-6M5 13v14M5 20h6M49 13v14M49 20h-6" />
            </svg>
            靠边固定
          </button>
          <button type="button" className="flex flex-col items-center">
            <svg width="54" height="40" viewBox="0 0 54 40" fill="none" stroke="#78797d" aria-hidden="true">
              <rect x=".5" y=".5" width="53" height="39" rx="3" fill="#48484a" stroke="#58585a" />
              <path d="M24 4.500h6M24 35.500h6M27.500 5v30M5 20.500h44M5 17v7M49 17v7" />
            </svg>
            固定尺寸
          </button>
          <div className="flex flex-col items-center">
            <svg width="54" height="40" viewBox="0 0 54 40" aria-hidden="true">
              <rect x=".5" y=".5" width="53" height="39" rx="3" fill="#2e2c31" stroke="#48474b" />
              <rect x="8" y="7" width="8" height="8" fill="#a56a58" stroke="#77787b" />
              <path d="M5 5h14v14H5z" fill="none" stroke="#d2d2d4" strokeWidth="3" strokeLinecap="round" strokeDasharray="0.100 6.900" />
            </svg>
            预览
          </div>
        </div>
        <SectionHeader title="原型"><Plus size={12} strokeWidth={1.700} /></SectionHeader>
        <label className="ml-2 flex h-9 items-center gap-[5px] border-t border-[#454448] pb-[2px] text-[10px] font-medium text-[#d2d2d4]">
          <input type="checkbox" className="size-[10px] appearance-none rounded-[2px] border border-[#58585a] bg-[#48484a]" />
          滚动时保持固定
        </label>
        <SectionHeader title="外观">{down}</SectionHeader>
        <div className="relative ml-2 mr-[2px]">
          <select aria-label="图层样式" className="h-8 w-full appearance-none rounded-[3px] border border-[#58585a] bg-[#48484a] pl-2 text-[10px] font-medium text-[#dcdcde]">
            <option>无图层样式</option>
          </select>
          <ChevronDown size={9} strokeWidth={2.400} className="pointer-events-none absolute right-1 top-3 text-[#b4b4b6]" />
        </div>
        <div className="flex gap-1 pb-[5px] pl-2 pr-[2px] pt-[6px]">
          {styleActions.map(({ label, on, icon }) => (
            <button key={label} type="button" className="flex flex-1 flex-col items-center text-[8px] font-medium leading-[17px] text-[#d2d2d4]">
              <span className={`flex h-[18px] w-full items-center justify-center rounded-[3px] ${on ? 'bg-[#606165] text-[#d2d2d4]' : 'bg-[#48484a] text-[#77787b]'}`}>
                {icon}
              </span>
              {label}
            </button>
          ))}
        </div>
        <div className="ml-2 border-t border-[#454448]" />
        <div className="pb-[10px] pt-[7px]">
          <SliderRow
            label="不透明度（正常）"
            id="opacity"
            value={100}
            text="100"
            unit="%"
            track="bg-[#2a7df6]"
            sort={<ChevronsUpDown size={10} className="text-[#98989b]" />}
          />
        </div>
        <SectionHeader title="样式">{down}</SectionHeader>
        <div className="ml-2 flex h-[27px] items-center border-t border-[#454448] pr-[3px] text-[10px] font-bold text-[#e0e0e2]">
          填充
          <Svg size={13} className="ml-auto text-[#b4b4b6]">
            <circle cx="12" cy="12" r="6.500" strokeWidth="4" />
            <circle cx="12" cy="12" r="10" strokeWidth="3" strokeDasharray="5.200 5.270" />
          </Svg>
          <Plus size={13} strokeWidth={1.700} className="ml-2 text-[#a3a3a6]" />
        </div>
        <div className="flex items-start pl-2 text-[8px] font-medium leading-[15px] text-[#bdbdbf]">
          <label className="relative mt-1 flex" aria-label="启用填充">
            <input type="checkbox" defaultChecked className="size-[10px] appearance-none rounded-[2px] bg-[#2a7df6]" />
            <svg width="10" height="10" viewBox="0 0 10 10" className="absolute inset-0" fill="none" stroke="#fff" strokeWidth="1.500" aria-hidden="true">
              <path d="m2.500 5 2 2 3-4" />
            </svg>
          </label>
          <div className="ml-2 flex flex-col items-center">
            <button type="button" aria-label="填充颜色" className="flex h-[18px] w-[43px] items-center justify-end rounded-[3px] border border-[#454448] bg-[#2b2728]">
              <span className="flex h-full w-[14px] items-center justify-center bg-[#38373b] text-[#b4b4b6]">
                <Svg size={10}><circle cx="9" cy="14" r="6.500" /><circle cx="15" cy="9" r="7" fill="currentColor" /></Svg>
              </span>
            </button>
            <span>颜色</span>
          </div>
          <label className="ml-[5px] flex min-w-0 flex-1 flex-col items-center">
            <span className={`${field} h-[18px] w-full gap-1 px-1`}>
              <span className="text-[#98989b]">#</span>
              <input defaultValue="BE582E" className="w-full min-w-0 bg-transparent outline-none" />
            </span>
            Hex
          </label>
          <div className="ml-[5px] mr-[2px] flex flex-col items-center">
            <NumberField label="填充不透明度" value="100" unit="%" />
            <span className="whitespace-nowrap">不透明度</span>
          </div>
        </div>
        <ColorPopover />
      </div>
      <div className="pointer-events-none absolute -left-[2px] right-0 top-[339px] h-[303px] rounded-md border-2 border-[#e0621c]" />
    </aside>
  );
}

export default function App() {
  return (
    <div className="flex h-screen flex-col bg-white px-[126px] pb-[216px] pt-[33px] [font-family:Inter,'Noto_Sans_CJK_SC',sans-serif]">
      <div className="flex min-h-0 flex-1 flex-col overflow-hidden rounded-2xl shadow-[0_70px_110px_rgba(20,20,30,0.24)]">
        <MenuBar />
        <ToolBar />
        <div className="relative flex h-[21px] shrink-0 items-center justify-center border-b border-t border-b-[#1f1f21] border-t-[#59595b] bg-[#3d3d3f] pl-[6px] text-[10px] font-bold text-[#e4e4e6]">
          未命名
          <button type="button" aria-label="新建标签" className="absolute inset-y-0 right-0 flex w-[14px] items-center overflow-hidden border-l border-[#66676b] bg-[#333335] pl-1 text-[#8a8a8c]">
            <Plus size={13} className="shrink-0" />
          </button>
        </div>
        <div className="flex min-h-0 flex-1">
          <Sidebar />
          <Canvas />
          <PluginStrips />
          <Inspector />
        </div>
      </div>
    </div>
  );
}
